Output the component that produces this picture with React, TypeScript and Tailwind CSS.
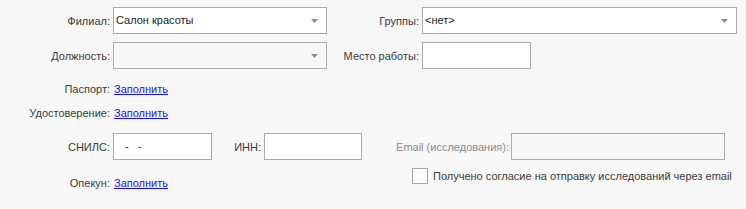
import React from 'react';

const labelCls = 'text-right text-[11px] leading-[14px] text-[#3b3b3b] whitespace-nowrap';

function Combo({ value, width, disabled }: { value?: string; width: string; disabled?: boolean }) {
  return (
    <div
      className={`${width} h-[27px] border border-[#ababab] flex items-center pl-[2px] pr-[8px] ${
        disabled ? 'bg-[#f7f7f7]' : 'bg-white'
      }`}
    >
      <span className="flex-1 text-[11px] text-[#1a1a1a] truncate">{value}</span>
      <svg width="7" height="4" viewBox="0 0 7 4" className="shrink-0">
        <path d="M0 0h7L3.5 4z" fill="#8a8a8a" />
      </svg>
    </div>
  );
}

function Field({ width, value, disabled }: { width: string; value?: string; disabled?: boolean }) {
  return (
    <div
      className={`${width} h-[27px] border border-[#ababab] flex items-center pl-[11px] text-[11px] text-[#1a1a1a] whitespace-pre ${
        disabled ? 'bg-[#f7f7f7]' : 'bg-white'
      }`}
    >
      {value}
    </div>
  );
}

function LinkRow({ label, top }: { label: string; top: string }) {
  return (
    <div className={`flex items-center ${top}`}>
      <div className={`w-[110px] ${labelCls}`}>{label}</div>
      <a href="#" className="ml-[4px] text-[11px] leading-[14px] text-[#1a0dff] underline">
        Заполнить
      </a>
    </div>
  );
}

export default function App() {
  return (
    <div
      className="w-[746px] h-[209px] overflow-hidden bg-[#f7f7f7]"
      style={{ fontFamily: '"Liberation Sans", Arial, sans-serif' }}
    >
      <div className="flex items-center mt-[7px]">
        <div className={`w-[110px] ${labelCls}`}>Филиал:</div>
        <div className="ml-[3px]">
          <Combo value="Салон красоты" width="w-[214px]" />
        </div>
        <div className={`w-[92px] ${labelCls}`}>Группы:</div>
        <div className="ml-[3px]">
          <Combo value="<нет>" width="w-[315px]" />
        </div>
      </div>

      <div className="flex items-center mt-[8px]">
        <div className={`w-[110px] ${labelCls}`}>Должность:</div>
        <div className="ml-[3px]">
          <Combo width="w-[214px]" disabled />
        </div>
        <div className={`w-[92px] ${labelCls}`}>Место работы:</div>
        <div className="ml-[3px]">
          <div className="w-[109px] h-[27px] border border-[#ababab] bg-white" />
        </div>
      </div>

      <LinkRow label="Паспорт:" top="mt-[13px]" />
      <LinkRow label="Удостоверение:" top="mt-[10px]" />

      <div className="flex items-center mt-[13px]">
        <div className={`w-[110px] ${labelCls}`}>СНИЛС:</div>
        <div className="ml-[3px]">
          <Field width="w-[99px]" value="-   -" />
        </div>
        <div className={`w-[49px] ${labelCls}`}>ИНН:</div>
        <div className="ml-[3px]">
          <Field width="w-[98px]" />
        </div>
        <div className={`w-[147px] ${labelCls} !text-[#8c8c8c]`}>Email (исследования):</div>
        <div className="ml-[2px]">
          <Field width="w-[214px]" disabled />
        </div>
      </div>

      <div className="flex items-start mt-[8px] h-[30px]">
        <div className="flex items-center mt-[8px] w-[412px]">
          <div className={`w-[110px] ${labelCls}`}>Опекун:</div>
          <a href="#" className="ml-[4px] text-[11px] leading-[14px] text-[#1a0dff] underline">
            Заполнить
          </a>
        </div>
        <label className="flex items-center">
          <span className="w-[16px] h-[16px] border border-[#ababab] bg-white" />
          <span className="ml-[5px] text-[11px] leading-[14px] text-[#3b3b3b] whitespace-nowrap">
            Получено согласие на отправку исследований через email
          </span>
        </label>
      </div>

      <div className="mt-[8px] pl-[2px] text-[13px] leading-[16px] font-bold text-[#222]">Дополнительно</div>
    </div>
  );
}
